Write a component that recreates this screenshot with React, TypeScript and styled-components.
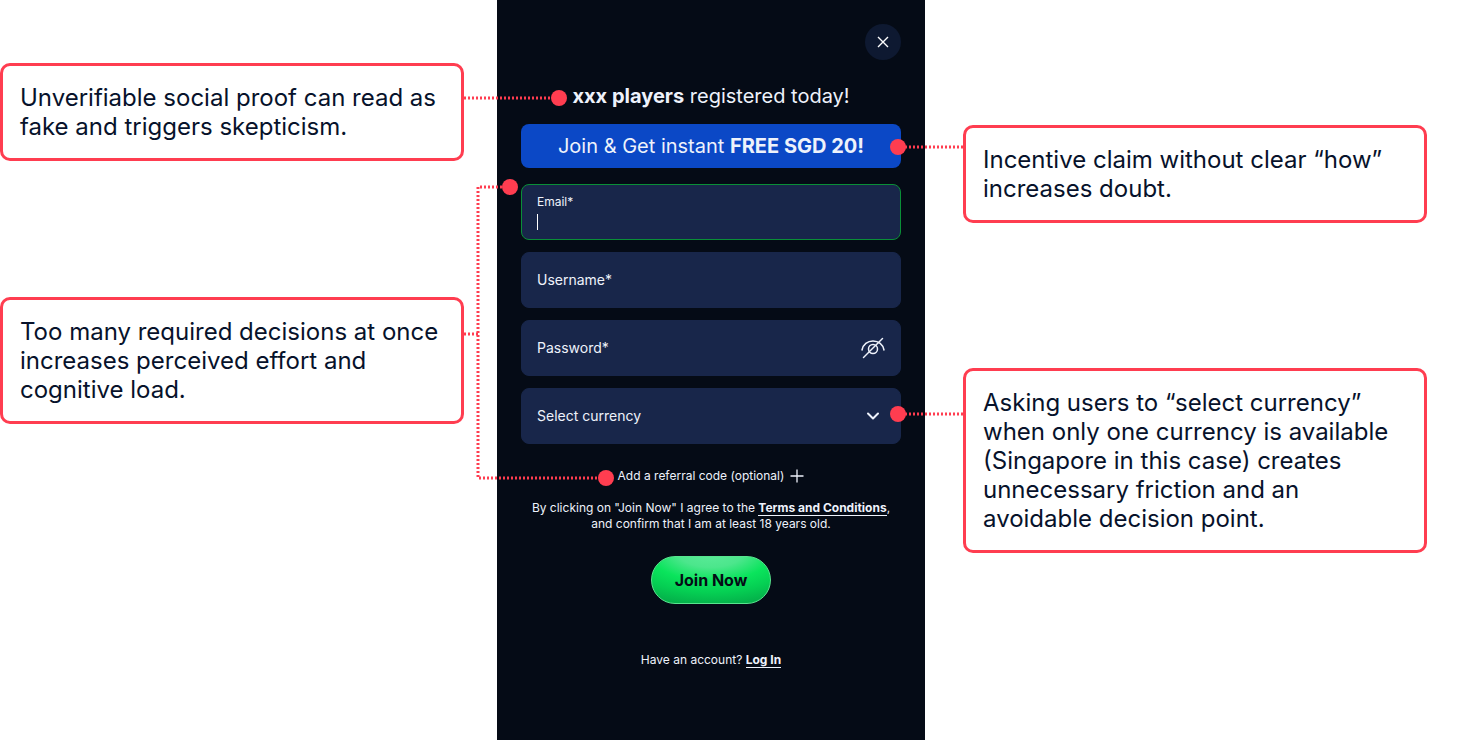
import React from 'react';
import styled, { createGlobalStyle } from 'styled-components';

const accent = '#ff3d50';

const GlobalStyle = createGlobalStyle`
  *, *::before, *::after { box-sizing: border-box; }
  body {
    margin: 0;
    background: #ffffff;
    font-family: Inter, 'Liberation Sans', sans-serif;
  }
  button, input, select { font: inherit; color: inherit; }
`;

const Page = styled.main`
  display: grid;
  grid-template-columns: minmax(0, 1fr) 33px 428px 38px minmax(0, 1fr);
  min-height: 100vh;
  padding-right: 30px;
`;

const Notes = styled.aside<{ $column: number; $top: number; $gap: number }>`
  grid-column: ${(p) => p.$column};
  grid-row: 1;
  display: flex;
  flex-direction: column;
  gap: ${(p) => p.$gap}px;
  padding-top: ${(p) => p.$top}px;
`;

const Note = styled.section`
  position: relative;
  z-index: 1;
  padding: 17px;
  border: 3px solid ${accent};
  border-radius: 10px;
  background: #ffffff;
  color: #07122b;
  font-size: 24px;
  line-height: 29px;
`;

const NoteText = styled.p`
  margin: 0;
`;

const Leader = styled.svg<{ $side: 'left' | 'right'; $top: number }>`
  position: absolute;
  top: ${(p) => p.$top}px;
  ${(p) => (p.$side === 'right' ? 'left' : 'right')}: calc(100% + 3px);
  overflow: visible;
  pointer-events: none;
`;

const LeaderPath = styled.path`
  fill: none;
  stroke: ${accent};
  stroke-width: 3;
  stroke-dasharray: 2 2;
`;

const LeaderDot = styled.circle`
  fill: ${accent};
`;

const Panel = styled.form`
  grid-column: 3;
  grid-row: 1;
  display: flex;
  flex-direction: column;
  padding: 24px;
  background: #050b16;
  color: #eef2fb;
`;

const CloseButton = styled.button`
  display: grid;
  place-items: center;
  align-self: flex-end;
  width: 36px;
  height: 36px;
  padding: 0;
  border: 0;
  border-radius: 50%;
  background: #0e1931;
  color: #ffffff;
`;

const Headline = styled.h1`
  margin: 22px 0 14px;
  font-size: 20px;
  font-weight: 400;
  line-height: 28px;
  text-align: center;
`;

const Strong = styled.strong`
  font-weight: 700;
`;

const Offer = styled.p`
  margin: 0 0 16px;
  border-radius: 8px;
  background: #0b48c6;
  font-size: 20px;
  font-weight: 400;
  line-height: 44px;
  text-align: center;
`;

const Fields = styled.div`
  display: flex;
  flex-direction: column;
  gap: 12px;
`;

const Field = styled.div<{ $active?: boolean }>`
  position: relative;
  display: flex;
  flex-direction: ${(p) => (p.$active ? 'column' : 'row')};
  align-items: ${(p) => (p.$active ? 'stretch' : 'center')};
  justify-content: center;
  gap: 4px;
  height: 56px;
  padding: 0 15px;
  border: 1px solid ${(p) => (p.$active ? '#0a8f37' : '#18264a')};
  border-radius: 8px;
  background: #18264a;
`;

const FieldLabel = styled.label<{ $small?: boolean }>`
  font-size: ${(p) => (p.$small ? 12 : 14)}px;
  line-height: 16px;
`;

const InputRow = styled.div`
  display: flex;
  height: 16px;
`;

const Caret = styled.span`
  width: 1px;
  background: #ffffff;
`;

const TextInput = styled.input`
  flex: 1;
  min-width: 0;
  height: 16px;
  padding: 0;
  border: 0;
  outline: 0;
  background: transparent;
  font-size: 14px;
`;

const Select = styled.select`
  flex: 1;
  align-self: stretch;
  padding: 0 0 2px;
  border: 0;
  outline: 0;
  appearance: none;
  background: transparent;
  font-size: 14px;
`;

const IconButton = styled.button`
  display: flex;
  padding: 0;
  border: 0;
  background: transparent;
`;

const Chevron = styled.svg`
  position: absolute;
  right: 15px;
  pointer-events: none;
`;

const ReferralButton = styled.button`
  display: flex;
  align-items: center;
  align-self: center;
  gap: 6px;
  margin: 24px 0 16px;
  padding: 0;
  border: 0;
  background: transparent;
  font-size: 12px;
  line-height: 16px;
`;

const SmallPrint = styled.p`
  margin: 0;
  font-size: 12px;
  line-height: 16px;
  text-align: center;
`;

const TextLink = styled.a`
  border-bottom: 1px solid currentColor;
  color: inherit;
  font-weight: 700;
  text-decoration: none;
`;

const JoinButton = styled.button`
  align-self: center;
  width: 120px;
  height: 48px;
  margin: 24px 0 48px;
  padding: 0;
  border: 1px solid #57e58d;
  border-radius: 24px;
  background: radial-gradient(ellipse 100% 120% at 50% -10%, #5eeb9b 0%, #4ce68c 28%, #0ae45c 52%, #05cf53 72%, #04a747 100%) border-box;
  color: #050b16;
  font-size: 16px;
  font-weight: 700;
`;

export default function App() {
  return (
    <>
      <GlobalStyle />
      <Page>
        <Notes $column={1} $top={63} $gap={136}>
          <Note>
            <NoteText>Unverifiable social proof can read as fake and triggers skepticism.</NoteText>
            <Leader $side="right" $top={24} width="103" height="16" aria-hidden="true">
              <LeaderPath d="M0 8H95" />
              <LeaderDot cx="95" cy="8" r="8" />
            </Leader>
          </Note>
          <Note>
            <NoteText>Too many required decisions at once increases perceived effort and cognitive load.</NoteText>
            <Leader $side="right" $top={-121} width="150" height="307" aria-hidden="true">
              <LeaderPath d="M0 155H14" />
              <LeaderPath d="M46 8H14V299H142" />
              <LeaderDot cx="46" cy="8" r="8" />
              <LeaderDot cx="142" cy="299" r="8" />
            </Leader>
          </Note>
        </Notes>

        <Panel onSubmit={(event) => event.preventDefault()}>
          <CloseButton type="button" aria-label="Close">
            <svg width="12" height="12" viewBox="0 0 12 12" fill="none" stroke="currentColor" strokeWidth="1.4">
              <path d="M1 1L11 11M11 1L1 11" />
            </svg>
          </CloseButton>
          <Headline>
            <Strong>xxx players</Strong> registered today!
          </Headline>
          <Offer>
            Join &amp; Get instant <Strong>FREE SGD 20!</Strong>
          </Offer>

          <Fields>
            <Field $active>
              <FieldLabel $small htmlFor="email">Email*</FieldLabel>
              <InputRow>
                <Caret />
                <TextInput id="email" type="email" />
              </InputRow>
            </Field>
            <Field>
              <FieldLabel htmlFor="username">Username*</FieldLabel>
              <TextInput id="username" type="text" />
            </Field>
            <Field>
              <FieldLabel htmlFor="password">Password*</FieldLabel>
              <TextInput id="password" type="password" />
              <IconButton type="button" aria-label="Show password">
                <svg width="24" height="24" viewBox="0 0 24 24" fill="none" stroke="currentColor" strokeWidth="1.5" strokeLinecap="round">
                  <path d="M1 14C2 8.500 6.500 5 12 5S22 8.500 23 14" />
                  <circle cx="12" cy="13" r="4.500" />
                  <path d="M2.500 21.500L21.500 2.500" />
                </svg>
              </IconButton>
            </Field>
            <Field>
              <Select aria-label="Select currency" defaultValue="">
                <option value="">Select currency</option>
                <option value="SGD">SGD</option>
              </Select>
              <Chevron width="24" height="24" viewBox="0 0 24 24" fill="none" stroke="currentColor" strokeWidth="2" strokeLinecap="round" strokeLinejoin="round" aria-hidden="true">
                <path d="M7 9.500L12 14.500L17 9.500" />
              </Chevron>
            </Field>
          </Fields>

          <ReferralButton type="button">
            Add a referral code (optional)
            <svg width="14" height="14" viewBox="0 0 14 14" fill="none" stroke="currentColor" strokeWidth="1.3" aria-hidden="true">
              <path d="M7 .5V13.500M.5 7H13.500" />
            </svg>
          </ReferralButton>
          <SmallPrint>
            By clicking on "Join Now" I agree to the <TextLink href="#terms">Terms and Conditions</TextLink>,
            <br />
            and confirm that I am at least 18 years old.
          </SmallPrint>
          <JoinButton type="submit">Join Now</JoinButton>
          <SmallPrint>
            Have an account? <TextLink href="#login">Log In</TextLink>
          </SmallPrint>
        </Panel>

        <Notes $column={5} $top={125} $gap={145}>
          <Note>
            <NoteText>Incentive claim without clear “how” increases doubt.</NoteText>
            <Leader $side="left" $top={11} width="73" height="16" aria-hidden="true">
              <LeaderPath d="M73 8H8" />
              <LeaderDot cx="8" cy="8" r="8" />
            </Leader>
          </Note>
          <Note>
            <NoteText>
              Asking users to “select currency” when only one currency is available (Singapore in this
              case) creates unnecessary friction and an avoidable decision point.
            </NoteText>
            <Leader $side="left" $top={35} width="73" height="16" aria-hidden="true">
              <LeaderPath d="M73 8H8" />
              <LeaderDot cx="8" cy="8" r="8" />
            </Leader>
          </Note>
        </Notes>
      </Page>
    </>
  );
}
